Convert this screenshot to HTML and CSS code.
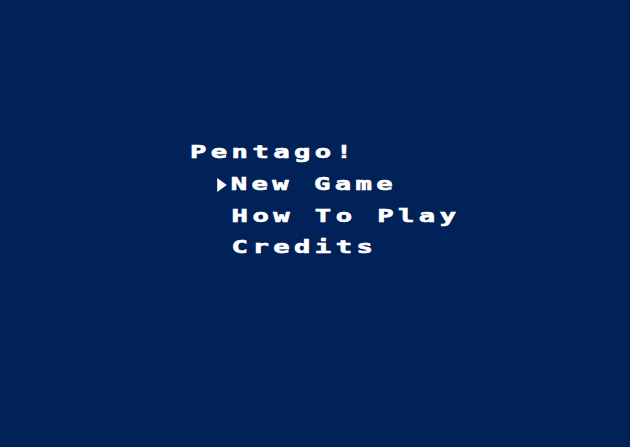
FILE: index.html
```html
<!DOCTYPE html>
<html>
<head>
<meta charset="utf-8">
<title>Pentago!</title>
<link rel="stylesheet" href="styles.css">
</head>
<body>
<main class="screen">
  <div class="menu">
    <div class="title">Pentago!</div>
    <div class="item selected"><span class="cursor"></span>New Game</div>
    <div class="item">How To Play</div>
    <div class="item">Credits</div>
  </div>
</main>
</body>
</html>
```
FILE: styles.css
```css
html, body {
  margin: 0;
  padding: 0;
  background: #012258;
}
.screen {
  width: 630px;
  height: 447px;
  box-sizing: border-box;
  padding: 137px 0 0 190px;
  background: #012258;
  overflow: hidden;
}
.menu {
  transform: scaleX(1.6);
  transform-origin: 0 0;
  font-family: "DejaVu Sans Mono", monospace;
  font-weight: bold;
  font-size: 17px;
  line-height: 31.8px;
  letter-spacing: 2.77px;
  color: #ffffff;
  -webkit-text-stroke: 0.6px #ffffff;
  white-space: nowrap;
}
.item {
  display: flex;
  align-items: center;
  padding-left: 26px;
}
.cursor {
  width: 0;
  height: 0;
  margin-left: -9.2px;
  margin-right: 2.6px;
  border-left: 6.6px solid #ffffff;
  border-top: 7px solid transparent;
  border-bottom: 7px solid transparent;
}
```
